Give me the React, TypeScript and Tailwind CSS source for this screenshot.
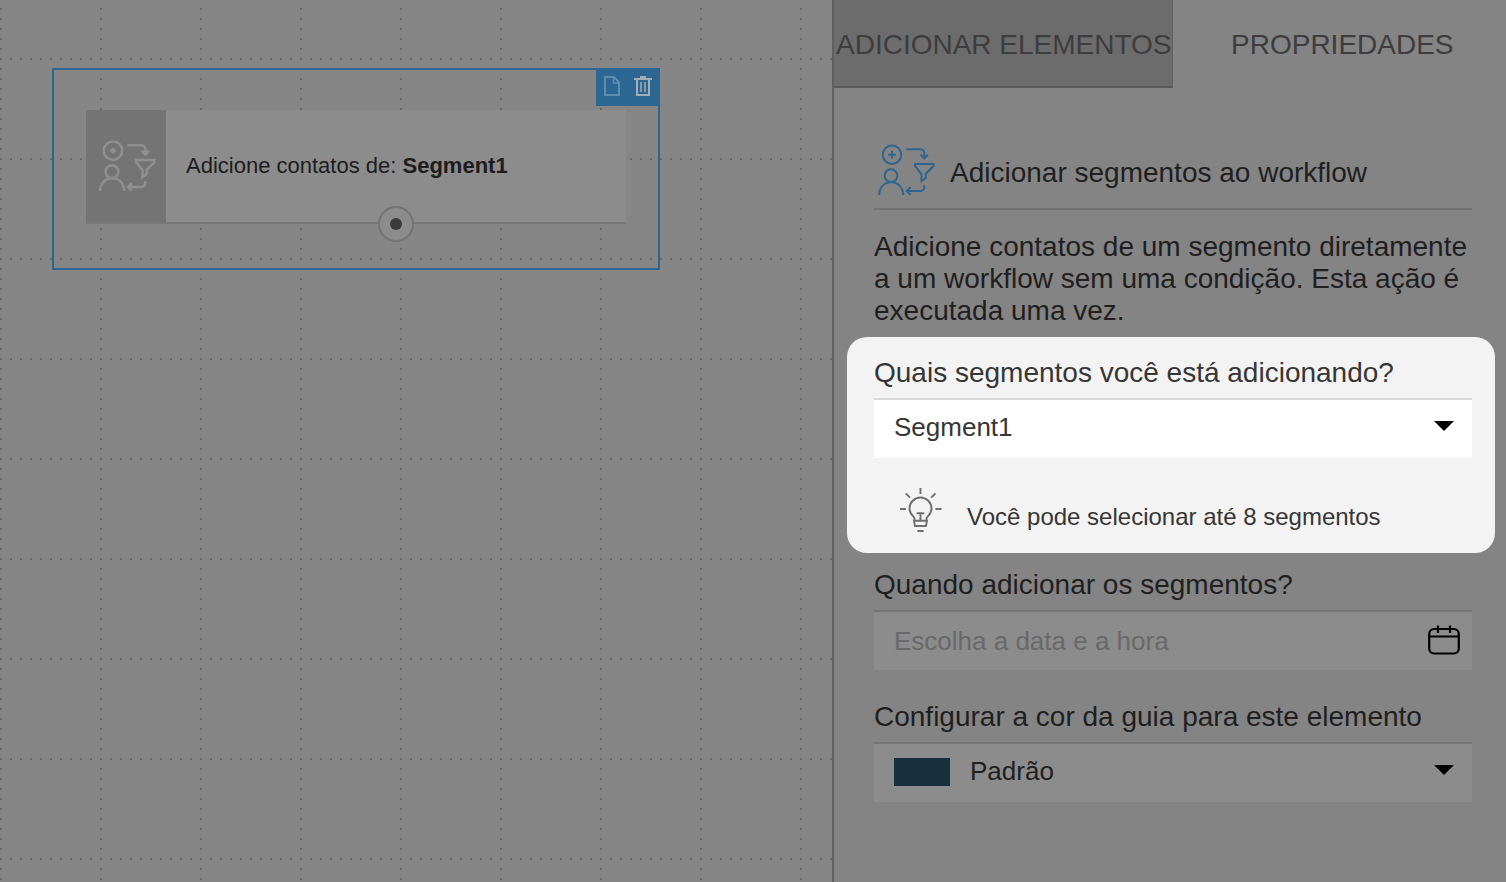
import { useState } from 'react'

interface IconProps {
  className?: string
  strokeWidth?: number
  solid?: boolean
}

function SegmentIcon({ className = '', strokeWidth = 2, solid = false }: IconProps) {
  return (
    <svg
      viewBox="0 0 58 52"
      fill="none"
      stroke="currentColor"
      strokeWidth={strokeWidth}
      className={`h-[52px] w-[58px] shrink-0 ${className}`}
    >
      <circle cx="15" cy="10.7" r="9.2" />
      {solid ? (
        <path d="M15 8.200l2.500 2.500-2.500 2.500-2.500-2.500z" fill="currentColor" strokeWidth="1.500" />
      ) : (
        <path d="M11 10.7h8M15 6.7v8" />
      )}
      <path d="M29.300 5.300h14a4 4 0 0 1 4 4v5" />
      <path d="M43.600 10.800l3.700 3.600 3.700-3.600" fill={solid ? 'currentColor' : 'none'} />
      <path d="M38 20h18.500v2l-7.800 8v4l-4.200 3v-7L38 22z" />
      <circle cx="14" cy="31.7" r="6.400" />
      <path d="M2.200 51c0-7.500 5-12.700 12-12.700s12 5.200 12 12.700" />
      <path d="M47.300 41.300v2a3.700 3.700 0 0 1-3.700 3.700H30" />
      <path d="M33.600 43.300L29.900 47l3.700 3.700" fill={solid ? 'currentColor' : 'none'} />
    </svg>
  )
}

function FileIcon() {
  return (
    <svg viewBox="0 0 16 20" fill="none" stroke="currentColor" strokeWidth="2" className="h-5 w-4">
      <path d="M1 1h9l5 5.500V19H1z" />
      <path d="M9.500 1v6H15" strokeWidth="1.500" />
    </svg>
  )
}

function TrashIcon() {
  return (
    <svg viewBox="0 0 18 20" fill="none" stroke="currentColor" strokeWidth="2" className="h-5 w-[18px]">
      <path d="M0 3h18M6 1h6M3 3v16h12V3" />
      <path d="M7 6v10M11 6v10" strokeWidth="1.500" />
    </svg>
  )
}

function BulbIcon() {
  return (
    <svg
      viewBox="0 0 44 46"
      fill="none"
      stroke="currentColor"
      strokeWidth="1.900"
      className="h-[46px] w-11 shrink-0 text-[#6f6f6f]"
    >
      <path d="M21.500 1v6M1 22h6M36.500 22h6M6.700 6.300l4.400 4.400M36.500 6.300l-4.400 4.400" />
      <path d="M15.500 34v-2.500c0-1.600-5-4-5-10a11 11 0 0 1 22 0c0 6-5 8.400-5 10V34" />
      <path d="M15 33.800h13l-1 5.200H16z" />
      <path d="M17.700 26.200h7.600M21.500 26.200v7.600M18.300 44h6.400" />
    </svg>
  )
}

function CalendarIcon() {
  return (
    <svg viewBox="0 0 32 30" fill="none" stroke="currentColor" strokeWidth="2.200" className="h-[30px] w-8">
      <rect x="1.200" y="4" width="29.600" height="24.500" rx="5" />
      <path d="M1 11.500h30M10 .500v7.500M22 .500v7.500" />
    </svg>
  )
}

function Caret() {
  return (
    <svg
      viewBox="0 0 20 10"
      fill="currentColor"
      className="pointer-events-none absolute right-[18px] top-[23px] h-[10px] w-5 text-black"
    >
      <path d="M0 0h20L10 10z" />
    </svg>
  )
}

function Canvas() {
  return (
    <main className="relative min-w-0 flex-1 bg-[#868686] bg-[radial-gradient(circle_at_1px_1px,#6a6a6a_1px,transparent_1px),radial-gradient(circle_at_1px_1px,#6a6a6a_1px,transparent_1px)] bg-[size:100px_10px,10px_100px] bg-[position:0_8px,0_58px]">
      <div className="absolute left-[52px] top-[68px] border-2 border-[#2f658d] px-8 pb-11 pt-10">
        <div className="absolute -right-0.5 -top-0.5 flex h-[38px] w-16 items-center justify-between bg-[#2c6693] px-2 pb-0.5">
          <button type="button" aria-label="Duplicar" className="text-[#5f8dae]">
            <FileIcon />
          </button>
          <button type="button" aria-label="Excluir" className="text-[#a3adb5]">
            <TrashIcon />
          </button>
        </div>

        <div className="relative flex h-[114px] w-[540px] border-b-2 border-[#787878] bg-[#8c8c8c]">
          <div className="flex w-20 items-center justify-center bg-[#747474] pl-0.5 text-[#8f8f8f]">
            <SegmentIcon strokeWidth={2.5} solid />
          </div>
          <p className="self-center px-5 text-[22px] leading-8 text-[#1d1d1d]">
            Adicione contatos de: <strong className="font-bold">Segment1</strong>
          </p>
          <span className="absolute -bottom-5 left-[292px] flex size-9 items-center justify-center rounded-full border-2 border-[#747474] bg-[#8c8c8c]">
            <span className="size-3 rounded-full bg-[#3b3b3b]" />
          </span>
        </div>
      </div>
    </main>
  )
}

function Tabs() {
  return (
    <div role="tablist" className="flex h-[88px] text-[28px] leading-8 text-[#3d3d3d]">
      <button
        type="button"
        role="tab"
        aria-selected="false"
        className="shrink-0 border-b-2 border-r border-b-[#595959] border-r-[#626262] bg-[#6c6c6c] pl-0.5 pt-1"
      >
        ADICIONAR ELEMENTOS
      </button>
      <button type="button" role="tab" aria-selected="true" className="flex-1 border-b-2 border-transparent pl-1.5 pt-1">
        PROPRIEDADES
      </button>
    </div>
  )
}

function Properties() {
  const [segment, setSegment] = useState('Segment1')
  const [date, setDate] = useState('')
  const [color, setColor] = useState('Padrão')

  return (
    <form className="pl-[13px] pr-[11px] text-[28px] leading-8 text-[#1f1f1f]">
      <div className="pl-[27px] pr-[23px] pt-14">
        <div className="flex items-center gap-[15px] border-b-2 border-[#727272] pb-3 pl-[3px]">
          <SegmentIcon className="text-[#2d6590]" />
          <h2 className="pt-1.5">Adicionar segmentos ao workflow</h2>
        </div>
        <p className="pb-[10px] pt-[21px]">
          Adicione contatos de um segmento diretamente a um workflow sem uma condição. Esta ação é executada uma vez.
        </p>
      </div>

      <div className="rounded-[20px] bg-[#f3f3f3] pb-5 pl-[27px] pr-[23px] pt-5 text-[#363636]">
        <label htmlFor="segment" className="block">
          Quais segmentos você está adicionando?
        </label>
        <div className="relative mt-[9px]">
          <select
            id="segment"
            value={segment}
            onChange={(e) => setSegment(e.target.value)}
            className="block h-[60px] w-full appearance-none border-t-2 border-[#d9d9d9] bg-white pb-1 pl-5 pr-12 text-[26px]"
          >
            <option>Segment1</option>
          </select>
          <Caret />
        </div>
        <div className="mt-[29px] flex items-end gap-6 pl-[25px]">
          <BulbIcon />
          <p className="text-2xl leading-8">Você pode selecionar até 8 segmentos</p>
        </div>
      </div>

      <div className="pl-[27px] pr-[23px] pt-4">
        <label htmlFor="date" className="block">
          Quando adicionar os segmentos?
        </label>
        <div className="relative mt-[9px]">
          <input
            id="date"
            type="text"
            value={date}
            onChange={(e) => setDate(e.target.value)}
            placeholder="Escolha a data e a hora"
            className="block h-[60px] w-full border-t-2 border-[#757575] bg-[#8c8c8c] pl-5 pr-14 text-[26px] placeholder:text-[#696969]"
          />
          <button type="button" aria-label="Abrir calendário" className="absolute right-3 top-[15px] text-black">
            <CalendarIcon />
          </button>
        </div>

        <label htmlFor="color" className="mt-[31px] block">
          Configurar a cor da guia para este elemento
        </label>
        <div className="relative mt-[9px]">
          <select
            id="color"
            value={color}
            onChange={(e) => setColor(e.target.value)}
            className="block h-[60px] w-full appearance-none border-t-2 border-[#757575] bg-[#8c8c8c] pb-1 pl-24 pr-12 text-[26px]"
          >
            <option>Padrão</option>
          </select>
          <span className="pointer-events-none absolute left-5 top-4 h-7 w-14 bg-[#182f3d]" />
          <Caret />
        </div>
      </div>
    </form>
  )
}

export default function App() {
  return (
    <div className="flex min-h-screen font-['Liberation_Sans',Arial,sans-serif]">
      <Canvas />
      <aside className="w-[674px] shrink-0 border-l-2 border-[#5f5f5f] bg-[#848484]">
        <Tabs />
        <Properties />
      </aside>
    </div>
  )
}
